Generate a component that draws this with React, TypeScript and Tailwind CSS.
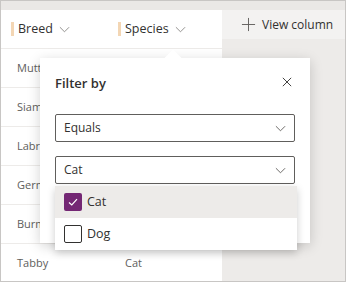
import React from 'react';

const rows = [
  { breed: 'Mutt', species: 'Dog' },
  { breed: 'Siamese', species: 'Cat' },
  { breed: 'Labrador', species: 'Dog' },
  { breed: 'German Shepherd', species: 'Dog' },
  { breed: 'Burmese', species: 'Cat' },
  { breed: 'Tabby', species: 'Cat' },
];

function Chevron({ className }: { className?: string }) {
  return (
    <svg viewBox="0 0 12 12" className={className} fill="none" stroke="currentColor" strokeWidth="1">
      <path d="M1 3.5 L6 8.5 L11 3.5" />
    </svg>
  );
}

function ColumnHeader({ label, width }: { label: string; width: string }) {
  return (
    <div className={`flex items-center h-full pl-[10px] ${width}`}>
      <span className="w-[3px] h-[14px] bg-[#f3d6b4] mr-[4px]" />
      <span className="text-[12.5px] text-[#323130]">{label}</span>
      <Chevron className="w-[11px] h-[11px] ml-[6px] text-[#8a8886]" />
    </div>
  );
}

function Dropdown({ value }: { value: string }) {
  return (
    <div className="h-[28px] border border-[#605e5c] rounded-[2px] flex items-center justify-between pl-[8px] pr-[8px]">
      <span className="text-[12px] text-[#323130] leading-none">{value}</span>
      <Chevron className="w-[11px] h-[11px] text-[#605e5c]" />
    </div>
  );
}

function Option({ label, checked }: { label: string; checked: boolean }) {
  return (
    <div className={`h-[32px] flex items-center pl-[9px] ${checked ? 'bg-[#edebe9]' : 'bg-white'}`}>
      {checked ? (
        <span className="w-[18px] h-[18px] rounded-[2px] bg-[#742774] flex items-center justify-center">
          <svg viewBox="0 0 12 12" className="w-[12px] h-[12px]" fill="none" stroke="white" strokeWidth="1.2">
            <path d="M2 6.5 L4.8 9 L10 3.2" />
          </svg>
        </span>
      ) : (
        <span className="w-[18px] h-[18px] rounded-[2px] border border-[#323130]" />
      )}
      <span className="ml-[5px] text-[12.5px] text-[#323130]">{label}</span>
    </div>
  );
}

export default function App() {
  return (
    <div
      className="relative w-[346px] h-[282px] overflow-hidden border border-[#c8c6c4] bg-[#eae8e6]"
      style={{ fontFamily: '"Open Sans", "Noto Sans", sans-serif' }}
    >
      <div className="h-[9px]" />
      <div className="flex h-[272px]">
        <div className="w-[221px] bg-white">
          <div className="h-[39px] flex border-b border-[#edebe9]">
            <ColumnHeader label="Breed" width="w-[107px]" />
            <ColumnHeader label="Species" width="flex-1" />
          </div>
          {rows.map((r) => (
            <div key={r.breed} className="h-[39px] flex items-center border-b border-[#edebe9] last:border-b-0 text-[11px] text-[#605e5c]">
              <span className="w-[107px] pl-[16px] truncate">{r.breed}</span>
              <span className="pl-[17px]">{r.species}</span>
            </div>
          ))}
        </div>
        <div className="flex-1 flex flex-col">
          <div className="h-[29px] bg-[#f3f2f1] flex items-center pl-[19px] text-[12px] text-[#323130]">
            <svg viewBox="0 0 16 16" className="w-[15px] h-[15px] mr-[6px]" fill="none" stroke="#605e5c" strokeWidth="1">
              <path d="M8 1 V15 M1 8 H15" />
            </svg>
            View column
          </div>
          <div className="flex-1 bg-[#edebe9]" />
        </div>
      </div>

      {/* filter callout */}
      <div className="absolute left-[39px] top-[57px] w-[270px] h-[185px] bg-white shadow-[0_3px_12px_rgba(0,0,0,0.18)]">
        <div className="absolute -top-[6px] left-[127px] w-[12px] h-[12px] bg-white rotate-45" />
        <div className="relative px-[15px] pt-[14px]">
          <div className="flex items-center justify-between h-[20px]">
            <span className="text-[13px] font-semibold text-[#323130] pt-[3px]">Filter by</span>
            <svg viewBox="0 0 12 12" className="w-[10px] h-[10px] mr-[3px]" fill="none" stroke="#323130" strokeWidth="1.1">
              <path d="M1 1 L11 11 M11 1 L1 11" />
            </svg>
          </div>
          <div className="mt-[22px]">
            <Dropdown value="Equals" />
          </div>
          <div className="mt-[14px]">
            <Dropdown value="Cat" />
          </div>
        </div>
      </div>

      {/* options list */}
      <div className="absolute left-[54px] top-[185px] w-[242px] bg-white shadow-[0_3px_8px_rgba(0,0,0,0.2)]">
        <Option label="Cat" checked />
        <Option label="Dog" checked={false} />
      </div>
    </div>
  );
}
